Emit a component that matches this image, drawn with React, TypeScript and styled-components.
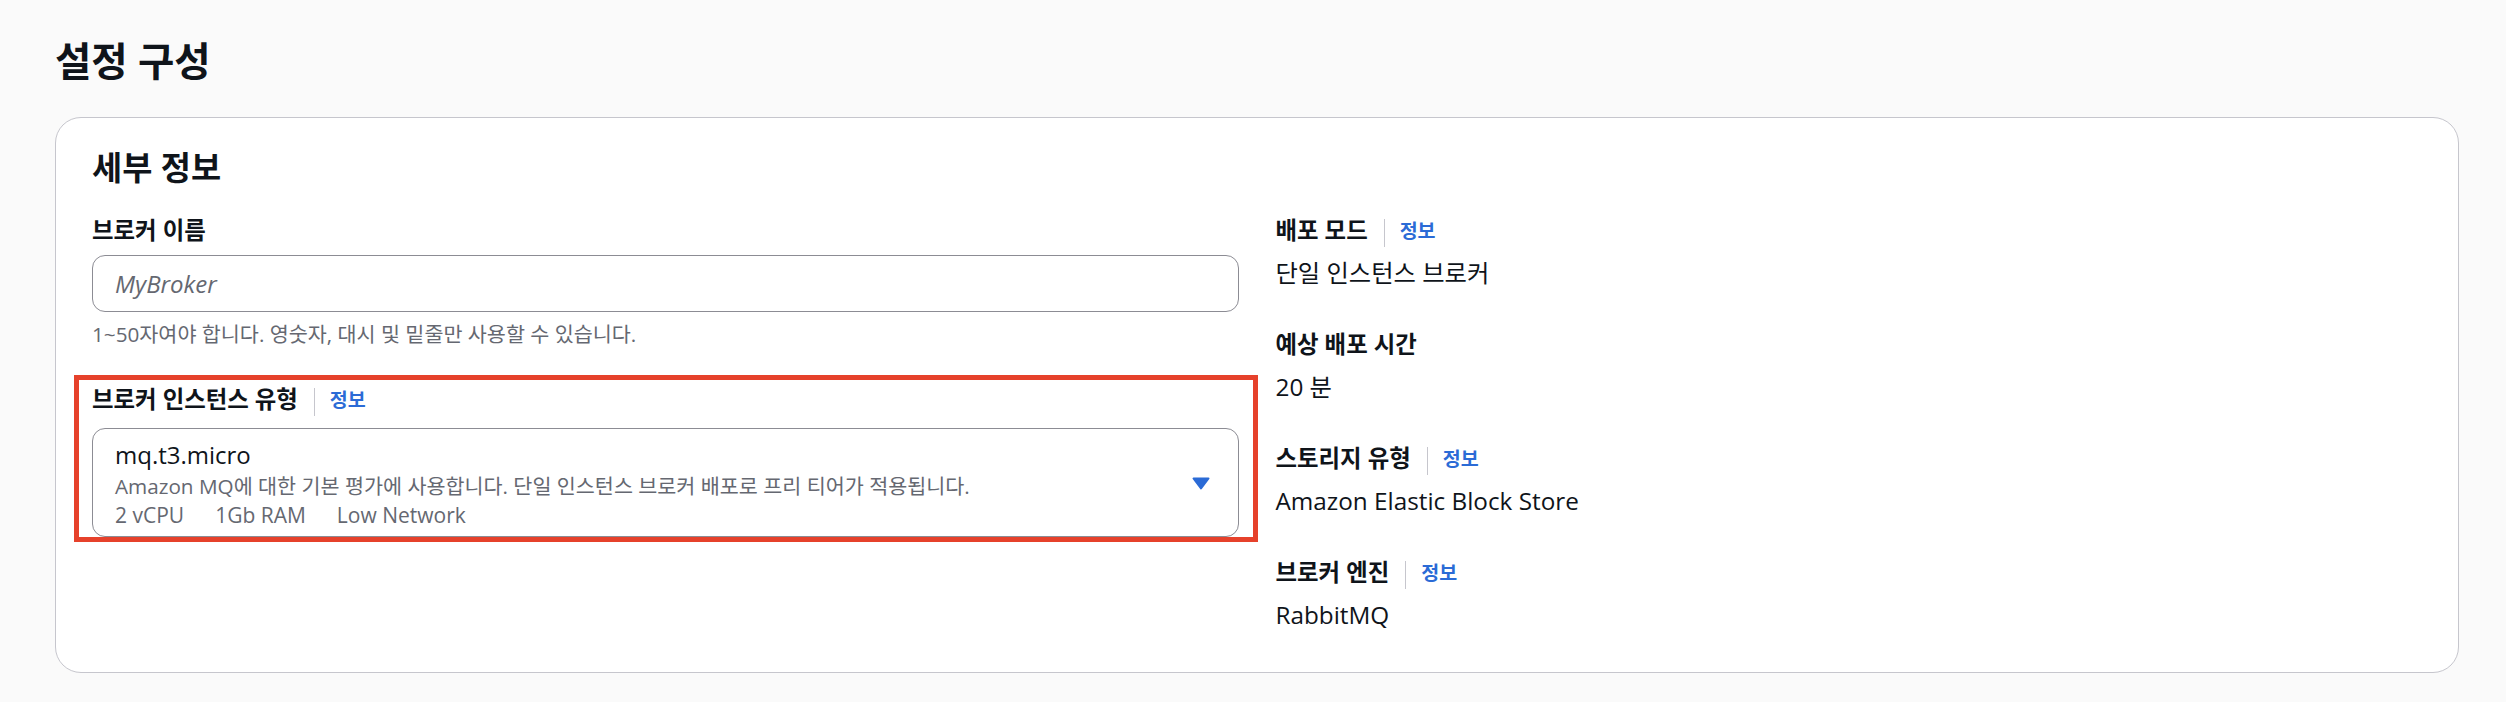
import React from "react";
import styled, { createGlobalStyle } from "styled-components";

const GlobalStyle = createGlobalStyle`
  html, body {
    margin: 0;
    padding: 0;
    background: #fafafa;
  }
  body {
    font-family: "Open Sans", "Noto Sans CJK KR", sans-serif;
    color: #0f141a;
  }
`;

const Page = styled.div`
  padding: 37px 47px 30px 55px;
`;

const PageTitle = styled.h1`
  margin: 0 0 32px 0;
  font-size: 39.5px;
  line-height: 48px;
  font-weight: 700;
  color: #0f141a;
`;

const Card = styled.section`
  background: #ffffff;
  border: 1px solid #c6c6cd;
  border-radius: 26px;
  padding: 32px 36px 40px 36px;
`;

const CardTitle = styled.h2`
  margin: 0 0 27px 0;
  font-size: 32.8px;
  line-height: 36px;
  font-weight: 700;
  color: #0f141a;
`;

const Columns = styled.div`
  display: grid;
  grid-template-columns: 1fr 1fr;
  column-gap: 37px;
  align-items: start;
`;

const Column = styled.div`
  display: flex;
  flex-direction: column;
`;

const Field = styled.div<{ $gap?: number }>`
  position: relative;
  display: flex;
  flex-direction: column;
  margin-bottom: ${(p) => p.$gap ?? 0}px;
`;

const LabelRow = styled.div<{ $mb: number }>`
  display: flex;
  align-items: center;
  height: 35px;
  margin-bottom: ${(p) => p.$mb}px;
`;

const Label = styled.span`
  font-size: 23.4px;
  line-height: 35px;
  font-weight: 700;
  color: #0f141a;
`;

const Divider = styled.span`
  display: inline-block;
  width: 1px;
  height: 28px;
  background: #c6c6cd;
  margin: 4px 15px 0 16px;
`;

const InfoLink = styled.a`
  font-size: 19.5px;
  line-height: 29px;
  font-weight: 700;
  color: #2b6bd6;
  text-decoration: none;
  cursor: pointer;
`;

const TextInput = styled.div`
  box-sizing: border-box;
  height: 57px;
  border: 1px solid #8c8c94;
  border-radius: 13px;
  padding: 0 22px;
  display: flex;
  align-items: center;
  background: #ffffff;
`;

const Placeholder = styled.span`
  font-size: 24px;
  font-style: italic;
  color: #656871;
`;

const Hint = styled.div`
  margin-top: 8px;
  font-size: 20.7px;
  line-height: 29px;
  color: #656871;
`;

const Select = styled.div`
  box-sizing: border-box;
  border: 1px solid #8c8c94;
  border-radius: 13px;
  padding: 8px 28px 6px 22px;
  display: flex;
  align-items: center;
  background: #ffffff;
`;

const OptionBody = styled.div`
  flex: 1;
  display: flex;
  flex-direction: column;
`;

const OptionTitle = styled.div`
  font-size: 24px;
  line-height: 35px;
  color: #0f141a;
`;

const OptionDesc = styled.div`
  font-size: 20.7px;
  line-height: 29px;
  color: #656871;
`;

const Tags = styled.div`
  display: flex;
  gap: 31px;
  font-size: 21px;
  line-height: 29px;
  color: #656871;
`;

const Caret = styled.svg`
  width: 18px;
  height: 13px;
  flex: none;
`;

const Value = styled.div`
  font-size: 24.3px;
  line-height: 35px;
  color: #0f141a;
`;

const Highlight = styled.div`
  position: absolute;
  top: -7px;
  left: -18px;
  right: -19px;
  bottom: -5px;
  border: 5px solid #e6412b;
  pointer-events: none;
`;

type Item = { label: string; value: string; info?: boolean };

const details: Item[] = [
  { label: "배포 모드", value: "단일 인스턴스 브로커", info: true },
  { label: "예상 배포 시간", value: "20 분" },
  { label: "스토리지 유형", value: "Amazon Elastic Block Store", info: true },
  { label: "브로커 엔진", value: "RabbitMQ", info: true },
];

export default function App() {
  return (
    <>
      <GlobalStyle />
      <Page>
        <PageTitle>설정 구성</PageTitle>
        <Card>
          <CardTitle>세부 정보</CardTitle>
          <Columns>
            <Column>
              <Field $gap={33}>
                <LabelRow $mb={7}>
                  <Label>브로커 이름</Label>
                </LabelRow>
                <TextInput>
                  <Placeholder>MyBroker</Placeholder>
                </TextInput>
                <Hint>1~50자여야 합니다. 영숫자, 대시 및 밑줄만 사용할 수 있습니다.</Hint>
              </Field>
              <Field>
                <LabelRow $mb={11}>
                  <Label>브로커 인스턴스 유형</Label>
                  <Divider />
                  <InfoLink>정보</InfoLink>
                </LabelRow>
                <Select>
                  <OptionBody>
                    <OptionTitle>mq.t3.micro</OptionTitle>
                    <OptionDesc>
                      Amazon MQ에 대한 기본 평가에 사용합니다. 단일 인스턴스 브로커 배포로 프리 티어가 적용됩니다.
                    </OptionDesc>
                    <Tags>
                      <span>2 vCPU</span>
                      <span>1Gb RAM</span>
                      <span>Low Network</span>
                    </Tags>
                  </OptionBody>
                  <Caret viewBox="0 0 18 13">
                    <path
                      d="M1.5 1.5 H16.5 L9 11.5 Z"
                      fill="#2b6bd6"
                      stroke="#2b6bd6"
                      strokeWidth="2"
                      strokeLinejoin="round"
                    />
                  </Caret>
                </Select>
                <Highlight />
              </Field>
            </Column>
            <Column>
              {details.map((d, i) => (
                <Field key={d.label} $gap={i < details.length - 1 ? 37 : 0}>
                  <LabelRow $mb={7}>
                    <Label>{d.label}</Label>
                    {d.info && (
                      <>
                        <Divider />
                        <InfoLink>정보</InfoLink>
                      </>
                    )}
                  </LabelRow>
                  <Value>{d.value}</Value>
                </Field>
              ))}
            </Column>
          </Columns>
        </Card>
      </Page>
    </>
  );
}
